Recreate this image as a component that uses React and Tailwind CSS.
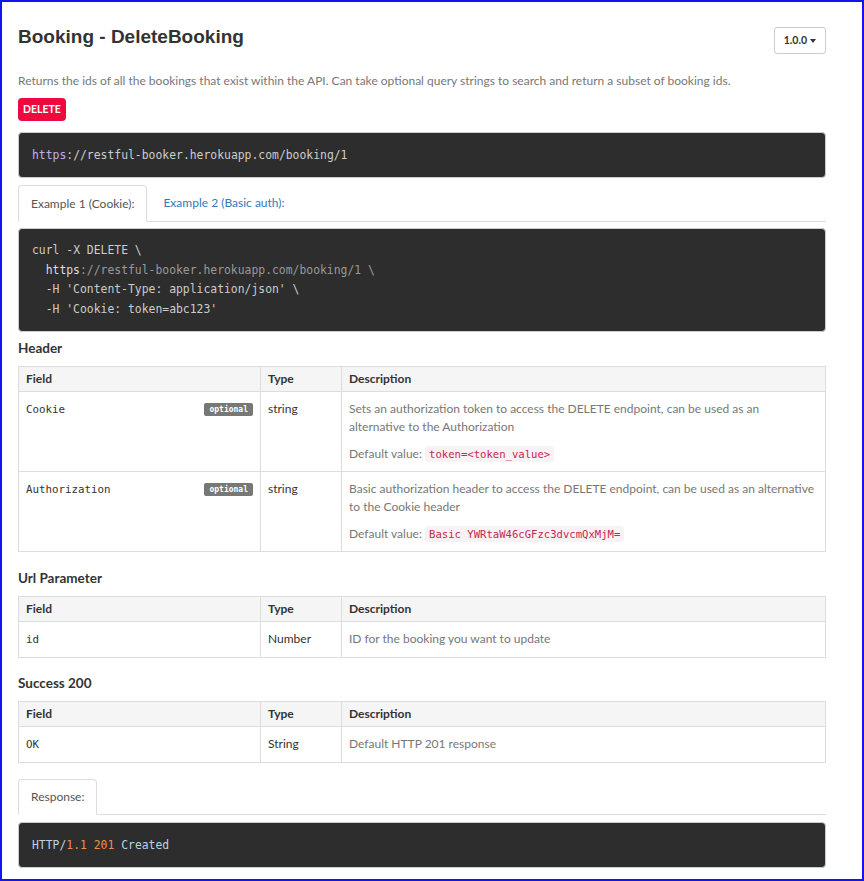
import React from "react";

const sans = "font-['Lato','Noto_Sans',sans-serif]";
const mono = "font-['DejaVu_Sans_Mono','Liberation_Mono',monospace]";

function Badge() {
  return (
    <span className={`${mono} float-right mt-[3px] inline-block rounded-[2px] bg-[#777777] px-[5px] text-[8px] font-bold leading-[13px] text-white`}>
      optional
    </span>
  );
}

function Code({ children }) {
  return (
    <code className={`${mono} rounded-[3px] bg-[#f9f2f4] px-[4px] py-[2px] text-[10.6px] text-[#c7254e]`}>
      {children}
    </code>
  );
}

function Table({ rows }) {
  return (
    <table className="mt-[8px] w-full border-collapse text-[12px]">
      <colgroup>
        <col className="w-[242px]" />
        <col className="w-[81px]" />
        <col />
      </colgroup>
      <thead>
        <tr className="bg-[#f5f5f5]">
          <th className="border border-[#dddddd] px-[7px] py-[3px] text-left font-bold leading-[18px] text-[#333333]">Field</th>
          <th className="border border-[#dddddd] px-[7px] py-[3px] text-left font-bold leading-[18px] text-[#333333]">Type</th>
          <th className="border border-[#dddddd] px-[7px] py-[3px] text-left font-bold leading-[18px] text-[#333333]">Description</th>
        </tr>
      </thead>
      <tbody>
        {rows.map((r, i) => (
          <tr key={i}>
            <td className="border border-[#dddddd] px-[7px] py-[8px] align-top leading-[18px]">
              <span className={`${mono} text-[10.8px] text-[#333333]`}>{r.field}</span>
              {r.optional && <Badge />}
            </td>
            <td className="border border-[#dddddd] px-[7px] py-[8px] align-top leading-[18px] text-[#333333]">{r.type}</td>
            <td className="border border-[#dddddd] px-[7px] py-[8px] align-top leading-[18px] text-[#777777]">
              <p>{r.desc}</p>
              {r.def && (
                <p className="mt-[9px]">
                  Default value: <Code>{r.def}</Code>
                </p>
              )}
            </td>
          </tr>
        ))}
      </tbody>
    </table>
  );
}

function Heading({ children, className = "" }) {
  return <h3 className={`text-[13.5px] font-bold leading-[20px] text-[#333333] ${className}`}>{children}</h3>;
}

export default function App() {
  return (
    <div className={`${sans} box-border h-[881px] w-[864px] overflow-hidden border-2 border-[#1414ee] bg-white pl-[16px] pr-[36px]`}>
      <div className="mt-[23px] flex h-[29px] items-start justify-between">
        <h1 className="font-['Liberation_Sans',Arial,sans-serif] text-[19px] font-bold leading-[24px] text-[#333333]">
          Booking - DeleteBooking
        </h1>
        <button className="mt-[2px] flex h-[27px] items-center gap-[3px] rounded-[3px] border border-[#cccccc] bg-white px-[9px] text-[10.5px] font-bold text-[#333333]">
          1.0.0
          <span className="inline-block h-0 w-0 border-x-[3.5px] border-t-[4px] border-x-transparent border-t-[#333333]" />
        </button>
      </div>

      <p className="mt-[18px] text-[12px] leading-[18px] text-[#777777]">
        Returns the ids of all the bookings that exist within the API. Can take optional query strings to search and return a subset of booking ids.
      </p>

      <div className="mt-[8px] flex">
        <span className="rounded-[4px] bg-[#ee0a3f] px-[5px] text-[10.5px] font-bold leading-[23px] text-white">DELETE</span>
      </div>

      <div className={`${mono} mt-[11px] box-border h-[46px] whitespace-pre rounded-[4px] border border-[#cccccc] bg-[#2d2d2d] px-[13px] text-[11.4px] leading-[44px] text-[#cccccc]`}>
        <span className="text-[#c2aeea]">https</span>
        <span>://restful-booker.herokuapp.com/booking/1</span>
      </div>

      <div className="mt-[7px] flex border-b border-[#dddddd] text-[12px]">
        <div className="-mb-px rounded-t-[4px] border border-[#dddddd] border-b-white bg-white px-[12px] leading-[35px] text-[#555555]">
          Example 1 (Cookie):
        </div>
        <div className="ml-[2px] px-[14px] leading-[35px] text-[#337ab7]">Example 2 (Basic auth):</div>
      </div>

      <div className={`${mono} mt-[6px] box-border whitespace-pre rounded-[4px] border border-[#cccccc] bg-[#2d2d2d] px-[13px] py-[12px] text-[11.4px] leading-[19.5px] text-[#cccccc]`}>
        <div>{"curl -X DELETE \\"}</div>
        <div className="pl-[13.7px]">
          <span className="text-[#dddddd]">https</span>
          <span className="text-[#999999]">{"://restful-booker.herokuapp.com/booking/1 \\"}</span>
        </div>
        <div className="pl-[13.7px]">{"-H 'Content-Type: application/json' \\"}</div>
        <div className="pl-[13.7px]">{"-H 'Cookie: token=abc123'"}</div>
      </div>

      <Heading className="mt-[6px]">Header</Heading>
      <Table
        rows={[
          {
            field: "Cookie",
            optional: true,
            type: "string",
            desc: "Sets an authorization token to access the DELETE endpoint, can be used as an alternative to the Authorization",
            def: "token=<token_value>",
          },
          {
            field: "Authorization",
            optional: true,
            type: "string",
            desc: "Basic authorization header to access the DELETE endpoint, can be used as an alternative to the Cookie header",
            def: "Basic YWRtaW46cGFzc3dvcmQxMjM=",
          },
        ]}
      />

      <Heading className="mt-[16px]">Url Parameter</Heading>
      <Table rows={[{ field: "id", type: "Number", desc: "ID for the booking you want to update" }]} />

      <Heading className="mt-[15px]">Success 200</Heading>
      <Table rows={[{ field: "OK", type: "String", desc: "Default HTTP 201 response" }]} />

      <div className="mt-[16px] flex border-b border-[#dddddd] text-[12px]">
        <div className="-mb-px rounded-t-[4px] border border-[#dddddd] border-b-white bg-white px-[12px] leading-[34px] text-[#555555]">
          Response:
        </div>
      </div>

      <div className={`${mono} mt-[7px] box-border h-[46px] whitespace-pre rounded-[4px] border border-[#cccccc] bg-[#2d2d2d] px-[13px] text-[11.4px] leading-[44px] text-[#bcd3e6]`}>
        <span>HTTP/</span>
        <span className="text-[#f08d49]">1.1 201</span>
        <span> Created</span>
      </div>
    </div>
  );
}
